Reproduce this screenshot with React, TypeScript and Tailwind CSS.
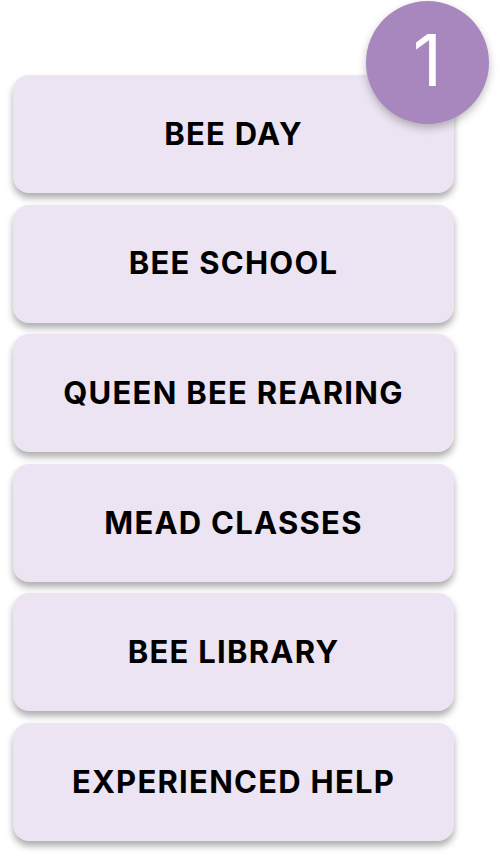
import React from "react";

const items = [
  "BEE DAY",
  "BEE SCHOOL",
  "QUEEN BEE REARING",
  "MEAD CLASSES",
  "BEE LIBRARY",
  "EXPERIENCED HELP",
];

export default function App() {
  return (
    <div className="relative w-[501px] h-[865px] bg-white overflow-hidden" style={{ fontFamily: "Inter, 'Liberation Sans', sans-serif" }}>
      <div className="flex flex-col gap-[11.6px] pt-[75px] pl-[13px] w-[454px]">
        {items.map((t) => (
          <div
            key={t}
            className="h-[118px] rounded-[16px] bg-[#ece4f2] flex items-center justify-center shadow-[0_5px_7px_rgba(0,0,0,0.32)]"
          >
            <span className="text-[31px] font-bold text-black tracking-[1.25px]">{t}</span>
          </div>
        ))}
      </div>
      <div className="absolute left-[366px] top-[1px] w-[123px] h-[123px] rounded-full bg-[#a886be] flex items-center justify-center shadow-[0_4px_8px_rgba(0,0,0,0.25)]">
        <span className="text-white text-[72px] font-normal leading-none mt-[-6px]">1</span>
      </div>
    </div>
  );
}
